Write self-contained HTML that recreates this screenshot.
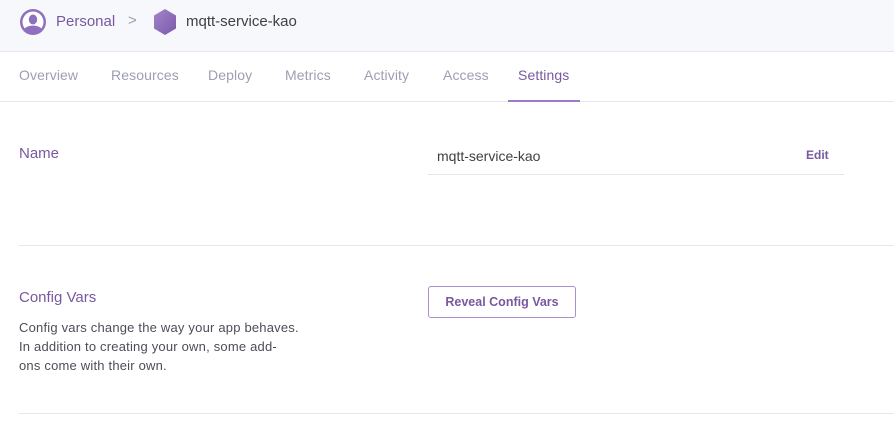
<!DOCTYPE html>
<html><head><style>
body{margin:0;width:894px;height:427px;overflow:hidden;background:#fff;font-family:"Liberation Sans",sans-serif;position:relative}
.hdr{position:absolute;left:0;top:0;width:894px;height:51px;background:#f7f8fb;border-bottom:1px solid #e6e7ee}
.t{position:absolute;white-space:nowrap}
.nav{position:absolute;top:67px;font-size:14px;color:#9e9eb4;letter-spacing:0.1px}
.line{position:absolute;height:1px;background:#e6e7ee}
</style></head><body>
<div class="hdr"></div>
<svg style="position:absolute;left:20px;top:9px" width="26" height="26" viewBox="0 0 26 26"><circle cx="13" cy="13" r="13" fill="#8f6fbf"/><circle cx="13" cy="13" r="10.5" fill="#fff"/><ellipse cx="13" cy="10.5" rx="4.2" ry="5" fill="#8f6fbf"/><path d="M4.5 20c2-4.5 15-4.5 17 0a10.5 10.5 0 0 1-17 0z" fill="#8f6fbf"/></svg>
<div class="t" style="left:56px;top:13px;font-size:15px;color:#79589f">Personal</div>
<div class="t" style="left:128px;top:12px;font-size:15px;color:#9a9aa8">&gt;</div>
<svg style="position:absolute;left:153px;top:9px" width="24" height="26" viewBox="0 0 24 26"><defs><linearGradient id="g" x1="0" y1="0" x2="1" y2="1"><stop offset="0" stop-color="#a485cc"/><stop offset="1" stop-color="#7a58a8"/></linearGradient></defs><path d="M12 0L23 6.5V19.5L12 26L1 19.5V6.5Z" fill="url(#g)"/></svg>
<div class="t" style="left:186px;top:13px;font-size:15px;color:#3f3f44">mqtt-service-kao</div>
<div class="nav" style="left:19px">Overview</div>
<div class="nav" style="left:111px">Resources</div>
<div class="nav" style="left:208px">Deploy</div>
<div class="nav" style="left:285px">Metrics</div>
<div class="nav" style="left:364px">Activity</div>
<div class="nav" style="left:443px">Access</div>
<div class="nav" style="left:518px;color:#79589f">Settings</div>
<div class="line" style="left:0;top:101px;width:894px"></div>
<div style="position:absolute;left:508px;top:100px;width:72px;height:2px;background:#9e7cc9"></div>
<div class="t" style="left:19px;top:145px;font-size:15px;color:#79589f">Name</div>
<div class="t" style="left:437px;top:148px;font-size:14px;color:#3f3f44">mqtt-service-kao</div>
<div class="t" style="left:806px;top:148px;font-size:12px;font-weight:bold;color:#79589f">Edit</div>
<div class="line" style="left:428px;top:174px;width:416px"></div>
<div class="line" style="left:19px;top:245px;width:875px"></div>
<div class="t" style="left:19px;top:289px;font-size:15px;color:#79589f">Config Vars</div>
<div class="t" style="left:19px;top:318px;font-size:13px;line-height:19px;color:#4d4d58;letter-spacing:0.2px">Config vars change the way your app behaves.<br>In addition to creating your own, some add-<br>ons come with their own.</div>
<div style="position:absolute;left:428px;top:286px;width:146px;height:30px;border:1px solid #a98fcc;border-radius:3px;text-align:center;line-height:30px;font-size:12.5px;font-weight:bold;color:#79589f">Reveal Config Vars</div>
<div class="line" style="left:19px;top:413px;width:875px"></div>
</body></html>
